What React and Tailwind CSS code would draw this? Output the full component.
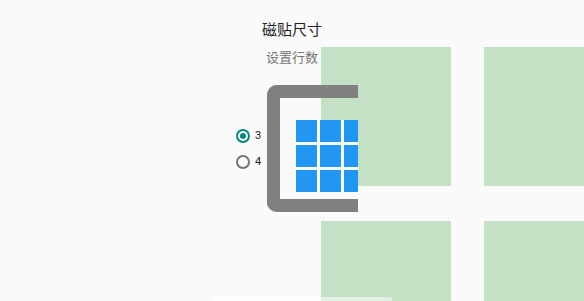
import React from "react";

function Radio({ checked, label }) {
  return (
    <div className="flex items-center h-[26px] gap-[5px]">
      <div
        className={
          "w-[14px] h-[14px] rounded-full border-2 flex items-center justify-center " +
          (checked ? "border-[#00897b]" : "border-[#757575]")
        }
      >
        {checked && <div className="w-[6px] h-[6px] rounded-full bg-[#00897b]" />}
      </div>
      <span className="text-[11px] leading-none text-[#212121]">{label}</span>
    </div>
  );
}

export default function App() {
  const tiles = Array.from({ length: 9 });
  return (
    <div className="relative w-[584px] h-[301px] overflow-hidden bg-[#fafafa] font-['Roboto','Noto_Sans_CJK_SC',sans-serif]">
      {/* background tile grid */}
      <div className="absolute inset-0 grid grid-cols-[130px_130px] grid-rows-[139px_139px] gap-x-[33px] gap-y-[35px] pl-[321px] pt-[47px]">
        <div className="bg-[#c5e1c5]" />
        <div className="bg-[#c5e1c5]" />
        <div className="bg-[#c5e1c5]" />
        <div className="bg-[#c5e1c5]" />
      </div>

      {/* foreground */}
      <div className="relative flex flex-col items-center pt-[20px]">
        <div className="text-[15px] leading-[20px] text-[#212121]">磁贴尺寸</div>
        <div className="mt-[9px] text-[13px] leading-[18px] text-[#757575]">设置行数</div>
        <div className="self-start ml-[236px] mt-[18px] flex items-center gap-[6px]">
          <div className="flex flex-col">
            <Radio checked label="3" />
            <Radio label="4" />
          </div>
          <div className="w-[91px] h-[127px] border-[13px] border-r-0 border-[#808080] rounded-l-[10px] overflow-hidden">
            <div className="pl-[16px] pt-[22px]">
              <div className="grid grid-cols-[21px_21px_21px] grid-rows-[22px_22px_22px] gap-x-[3px] gap-y-[3px] w-max bg-white/85">
                {tiles.map((_, i) => (
                  <div key={i} className="bg-[#2196f3]" />
                ))}
              </div>
            </div>
          </div>
        </div>
      </div>

      <div className="absolute bottom-0 left-[212px] w-[180px] h-[4px] bg-white/50 rounded-t-[2px]" />
    </div>
  );
}
